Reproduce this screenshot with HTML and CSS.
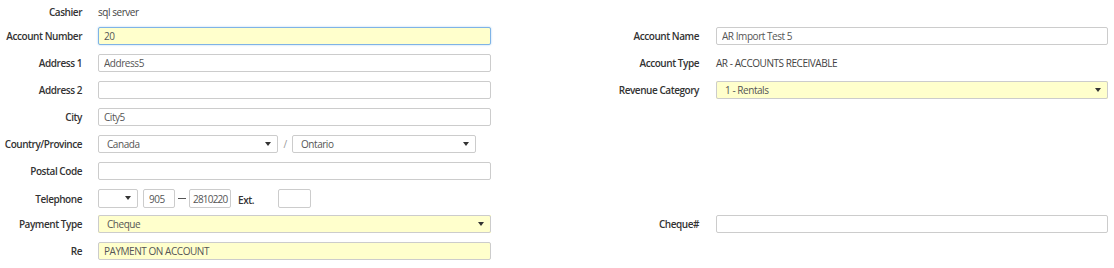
FILE: index.html
```html
<!DOCTYPE html>
<html>
<head>
    <title>Account</title>
    <link rel="stylesheet" href="styles.css">
</head>
<body>
    <form class="account-form">
        <div class="row row-first">
            <div class="half">
                <label class="lbl">Cashier</label>
                <span class="static">sql server</span>
            </div>
        </div>

        <div class="row">
            <div class="half">
                <label class="lbl">Account Number</label>
                <input class="field req focus" value="20">
            </div>
            <div class="half right">
                <label class="lbl wide">Account Name</label>
                <input class="field" value="AR Import Test 5">
            </div>
        </div>

        <div class="row">
            <div class="half">
                <label class="lbl">Address 1</label>
                <input class="field" value="Address5">
            </div>
            <div class="half right">
                <label class="lbl wide">Account Type</label>
                <span class="static">AR - ACCOUNTS RECEIVABLE</span>
            </div>
        </div>

        <div class="row">
            <div class="half">
                <label class="lbl">Address 2</label>
                <input class="field" value="">
            </div>
            <div class="half right">
                <label class="lbl wide">Revenue Category</label>
                <div class="sel full req"><select><option>1 - Rentals</option></select></div>
            </div>
        </div>

        <div class="row">
            <div class="half">
                <label class="lbl">City</label>
                <input class="field" value="City5">
            </div>
        </div>

        <div class="row">
            <div class="half">
                <label class="lbl">Country/Province</label>
                <div class="sel country"><select><option>Canada</option></select></div>
                <span class="slash">/</span>
                <div class="sel province"><select><option>Ontario</option></select></div>
            </div>
        </div>

        <div class="row">
            <div class="half">
                <label class="lbl">Postal Code</label>
                <input class="field" value="">
            </div>
        </div>

        <div class="row row-phone">
            <div class="half">
                <label class="lbl">Telephone</label>
                <div class="sel phone-type"><select><option></option></select></div>
                <input class="field area" value="905">
                <span class="dash"></span>
                <input class="field number" value="2810220">
                <span class="ext">Ext.</span>
                <input class="field extension" value="">
            </div>
        </div>

        <div class="row">
            <div class="half">
                <label class="lbl">Payment Type</label>
                <div class="sel full req"><select><option>Cheque</option></select></div>
            </div>
            <div class="half right">
                <label class="lbl wide">Cheque#</label>
                <input class="field" value="">
            </div>
        </div>

        <div class="row">
            <div class="half">
                <label class="lbl">Re</label>
                <input class="field req" value="PAYMENT ON ACCOUNT">
            </div>
        </div>
    </form>
</body>
</html>
```

FILE: styles.css
```css
body {
    margin: 0;
    padding: 0;
    background: #fff;
    font-family: "Open Sans", Arial, sans-serif;
    font-size: 10px;
    letter-spacing: -0.45px;
    color: #555;
}
.account-form {
    padding-top: 27px;
}
.row {
    display: flex;
    height: 18px;
    margin-bottom: 9px;
    align-items: center;
}
.row-first {
    height: 13px;
    margin-top: -22px;
    margin-bottom: 9px;
}
.row-phone {
    height: 19px;
    margin-top: 1px;
    margin-bottom: 7px;
}
.half {
    display: flex;
    align-items: center;
    width: 491px;
    height: 100%;
}
.half.right {
    width: 601px;
    margin-left: 16px;
}
.lbl {
    width: 82px;
    margin-right: 16px;
    text-align: right;
    font-weight: 600;
    color: #333;
    flex-shrink: 0;
}
.lbl.wide {
    width: 192px;
    margin-right: 17px;
}
.static {
    color: #444;
}
.field {
    box-sizing: border-box;
    flex: 1;
    height: 18px;
    margin: 0;
    padding: 0 5px;
    border: 1px solid #ccc;
    border-radius: 2px;
    background: #fff;
    font-family: inherit;
    font-size: 10px;
    letter-spacing: inherit;
    color: #555;
    outline: none;
}
.req,
.req select {
    background: #ffffcc;
}
.field.focus {
    border-color: #7fb3e6;
    box-shadow: 0 0 2px rgba(102, 175, 233, 0.6);
}
.sel {
    position: relative;
    height: 18px;
}
.sel.full {
    flex: 1;
}
.sel select {
    box-sizing: border-box;
    width: 100%;
    height: 18px;
    margin: 0;
    padding: 0 0 0 8px;
    border: 1px solid #ccc;
    border-radius: 2px;
    background: #fff;
    font-family: inherit;
    font-size: 10px;
    letter-spacing: inherit;
    color: #555;
    -webkit-appearance: none;
    appearance: none;
    outline: none;
}
.sel.req select {
    background: #ffffcc;
}
.sel::after {
    content: "";
    position: absolute;
    right: 7px;
    top: 7px;
    border-left: 3px solid transparent;
    border-right: 3px solid transparent;
    border-top: 4px solid #333;
    pointer-events: none;
}
.country {
    width: 180px;
}
.province {
    width: 184px;
}
.slash {
    width: 14px;
    text-align: center;
    color: #999;
}
.row-phone .sel,
.row-phone .sel select,
.row-phone .field {
    height: 19px;
}
.phone-type {
    width: 40px;
    margin-right: 5px;
}
.field.area {
    flex: none;
    width: 32px;
}
.dash {
    width: 8px;
    height: 1px;
    margin: 0 3px;
    background: #555;
}
.field.number {
    flex: none;
    width: 42px;
    padding: 0 1px 0 3px;
    letter-spacing: -0.8px;
}
.ext {
    width: 47px;
    padding-left: 7px;
    box-sizing: border-box;
    font-weight: 600;
    color: #333;
    padding-top: 3px;
}
.field.extension {
    flex: none;
    width: 33px;
}
```
